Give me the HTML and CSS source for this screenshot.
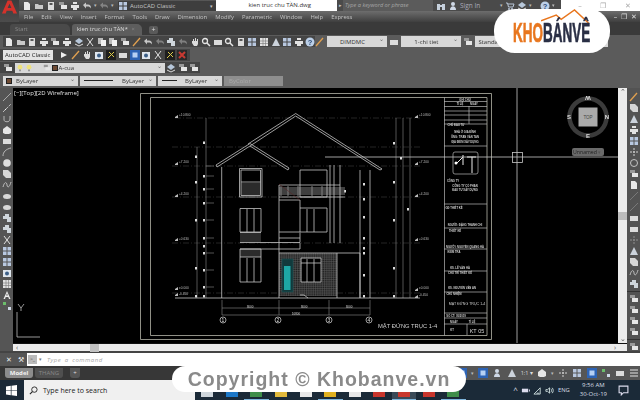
FILE: index.html
```html
<!DOCTYPE html>
<html lang="en">
<head>
<meta charset="utf-8">
<title>AutoCAD Classic - kien truc chu TẦN.dwg</title>
<link rel="stylesheet" href="styles.css">
</head>
<body>
<svg class="sprite">
  <symbol id="doc" viewBox="0 0 10 10"><path d="M2 1h4l2 2v6H2z" fill="#e8e8e8"/></symbol>
  <symbol id="folder" viewBox="0 0 10 10"><path d="M1 3h3l1 1h4v4H1z" fill="#c9c9c9"/></symbol>
  <symbol id="save" viewBox="0 0 10 10"><path d="M2 1h6v8H2z" fill="#dcdcdc"/><path d="M3.500 2h3v2h-3z" fill="#555"/></symbol>
  <symbol id="print" viewBox="0 0 10 10"><path d="M3 1h4v2H3zM1 4h8v3H1zM3 7h4v2H3z" fill="#e2e2e2"/></symbol>
  <symbol id="undo" viewBox="0 0 10 10"><path d="M1 4l3-2.500v2h2c2 0 3 1 3 4-1-1.500-2-2-3-2H4v2z" fill="#c8c8c8"/></symbol>
  <symbol id="cut" viewBox="0 0 10 10"><path d="M2 1l6 8M8 1L2 9" stroke="#e2e2e2" fill="none"/></symbol>
  <symbol id="copy" viewBox="0 0 10 10"><path d="M1 1h5v6H1z" fill="#bbb"/><path d="M4 3h5v6H4z" fill="#f0f0f0"/></symbol>
  <symbol id="hand" viewBox="0 0 10 10"><path d="M2 4h1V2h1v2h1V1h1v3h1V2h1v5L7 9H4L2 6z" fill="#ddd"/></symbol>
  <symbol id="zoom" viewBox="0 0 10 10"><circle cx="4" cy="4" r="2.500" fill="none" stroke="#e6e6e6" stroke-width="1.300"/><path d="M6 6l3 3" stroke="#e6e6e6" stroke-width="1.500"/></symbol>
  <symbol id="grid" viewBox="0 0 10 10"><path d="M1 1h3.500v3.500H1zM5.500 1H9v3.500H5.500zM1 5.500h3.500V9H1zM5.500 5.500H9V9H5.500z" fill="#b8c8e0"/></symbol>
  <symbol id="blue" viewBox="0 0 10 10"><path d="M0 0h10v10H0z" fill="#2d63b5"/><path d="M2.500 2.500h5v5h-5z" fill="#b6d0f4"/></symbol>
  <symbol id="line" viewBox="0 0 10 10"><path d="M1 9l8-8" stroke="#a8a8a8" fill="none"/></symbol>
  <symbol id="pline" viewBox="0 0 10 10"><path d="M1 9l8-8" stroke="#bbb" fill="none" stroke-dasharray="3 1"/><path d="M3 6h1v1H3z" fill="#fff"/></symbol>
  <symbol id="curve" viewBox="0 0 10 10"><path d="M2 2v4c0 2 6 3 6-1M8 5V2" stroke="#b5b5b5" fill="none"/></symbol>
  <symbol id="poly" viewBox="0 0 10 10"><path d="M5 1l4 3v4l-2 1H3L1 8V4z" fill="#e6e6e6"/></symbol>
  <symbol id="rect" viewBox="0 0 10 10"><path d="M1 3h8v5H1z" fill="#dcdcdc"/></symbol>
  <symbol id="arc" viewBox="0 0 10 10"><path d="M1 9C1 5 4 2 9 1" stroke="#b8b8b8" fill="none"/></symbol>
  <symbol id="circle" viewBox="0 0 10 10"><circle cx="5" cy="5" r="3.800" fill="#dedede"/></symbol>
  <symbol id="ring" viewBox="0 0 10 10"><circle cx="5" cy="5" r="3.500" fill="none" stroke="#c4c4c4"/></symbol>
  <symbol id="cloud" viewBox="0 0 10 10"><path d="M1 1h5l3 3v5H4L1 6z" fill="#d6d6d6"/></symbol>
  <symbol id="wave" viewBox="0 0 10 10"><path d="M1 7c2-7 4-4 4-2s2 4 4-3" stroke="#c0c0c0" fill="none"/></symbol>
  <symbol id="ellipse" viewBox="0 0 10 10"><ellipse cx="5" cy="5.500" rx="4" ry="2.500" fill="#d8d8d8"/></symbol>
  <symbol id="block" viewBox="0 0 10 10"><path d="M3 1h4v3h2v5H5V6H1V3h2z" fill="#cfd6dc"/></symbol>
  <symbol id="tri" viewBox="0 0 10 10"><path d="M5 1l4 8H1z" fill="#ccd3dc"/></symbol>
  <symbol id="cross" viewBox="0 0 10 10"><path d="M5 1v8M1 5h8" stroke="#d4d4d4" stroke-dasharray="2 1" fill="none"/></symbol>
  <symbol id="photo" viewBox="0 0 10 10"><path d="M1 2h8v7H1z" fill="#dfe6ee"/><circle cx="5" cy="5.500" r="2" fill="#3c5f88"/></symbol>
  <symbol id="table" viewBox="0 0 10 10"><path d="M1 1h8v8H1z" fill="#e2e2e2"/><path d="M1 4h8M1 6.500h8M4 1v8M6.500 1v8" stroke="#777" stroke-width=".6"/></symbol>
  <symbol id="letter" viewBox="0 0 10 10"><path d="M5 1l3.500 8h-1.500l-.7-2H3.700L3 9H1.500zM4.200 5.500h1.600L5 3.200z" fill="#eee"/></symbol>
  <symbol id="dots" viewBox="0 0 10 10"><path d="M1 1h3v3H1z" fill="#6bbd6b"/><path d="M6 6h3v3H6z" fill="#cfd8e8"/></symbol>
  <symbol id="pen" viewBox="0 0 10 10"><path d="M1 9l7-8" stroke="#e0a050" stroke-width="1.400" fill="none"/></symbol>
  <symbol id="tri2" viewBox="0 0 10 10"><path d="M2 2l6 3-6 3z" fill="#eee"/></symbol>
  <symbol id="star" viewBox="0 0 10 10"><path d="M0 0h10v10H0z" fill="#1e1e1e"/><path d="M2 8l6-6M3 2l5 5" stroke="#dccc4a"/></symbol>
  <symbol id="redx" viewBox="0 0 10 10"><path d="M0 0h10v10H0z" fill="#2a2a2a"/><path d="M2 2l6 6M8 2L2 8" stroke="#c83a32" stroke-width="2"/></symbol>
  <symbol id="stack" viewBox="0 0 10 10"><path d="M1 1h5v3H1z" fill="#999"/><path d="M3 4h6v4H3z" fill="#e6e6e6"/></symbol>
  <symbol id="layer" viewBox="0 0 10 10"><path d="M5 1l4 3-4 3-4-3z" fill="#b7c7da"/><path d="M1 7l4 2 4-2" stroke="#ddd" fill="none"/></symbol>
  <symbol id="burger" viewBox="0 0 10 10"><path d="M1 2h8M1 5h8M1 8h8" stroke="#e4e4e4" stroke-width="1.200"/></symbol>
  <symbol id="person" viewBox="0 0 10 10"><circle cx="5" cy="3" r="2" fill="#cfd8e6"/><path d="M2 9c0-5 6-5 6 0z" fill="#cfd8e6"/></symbol>
  <symbol id="bulb" viewBox="0 0 10 10"><circle cx="5" cy="4" r="3" fill="#efe27c"/><path d="M4 7h2v2H4z" fill="#888"/></symbol>
  <symbol id="cart" viewBox="0 0 10 10"><path d="M1 2h1.500l1 4h4.500l1-3H3" stroke="#b8c6d8" fill="none"/><circle cx="4" cy="8" r="1" fill="#b8c6d8"/><circle cx="7" cy="8" r="1" fill="#b8c6d8"/></symbol>
  <symbol id="binoc" viewBox="0 0 10 10"><path d="M1 3h3v6H1zM6 3h3v6H6zM4 4h2v2H4z" fill="#c6d0dc"/></symbol>
  <symbol id="help" viewBox="0 0 10 10"><circle cx="5" cy="5" r="4.500" fill="#bcd0e8"/><text x="5" y="8" font-size="7.500" font-family="Liberation Sans" font-weight="700" text-anchor="middle" fill="#2c4a78">?</text></symbol>
</svg>

<div class="screen">
  <header class="top">
    <div class="appbtn"><svg class="applogo" viewBox="0 0 18 14"><path d="M7 0h4l6 14h-4l-1-3H6l-1 3H1zM7 8h4L9 3.500z" fill="#d3322b"/></svg></div>
    <div class="topmain">
      <div class="titlebar">
        <div class="qat">
          <svg class="ic"><use href="#doc"/></svg><svg class="ic"><use href="#folder"/></svg><svg class="ic"><use href="#save"/></svg><svg class="ic"><use href="#stack"/></svg><svg class="ic"><use href="#print"/></svg><svg class="ic"><use href="#undo"/></svg><span class="caret">▾</span><svg class="ic dim"><use href="#undo"/></svg><span class="caret">▾</span>
          <div class="workspace"><svg class="ic"><use href="#grid"/></svg><span>AutoCAD Classic</span><span class="wscaret">▾</span></div>
        </div>
        <div class="doctitle"><span>kien truc chu TẦN.dwg</span></div>
        <div class="searchwrap"><span class="searchArrow">▸</span><span class="searchbox">Type a keyword or phrase</span></div>
        <div class="signin"><svg class="ic"><use href="#binoc"/></svg><svg class="ic"><use href="#person"/></svg><span class="signtext">Sign In</span><span class="caret">▾</span><svg class="ic"><use href="#cart"/></svg><svg class="ic"><use href="#layer"/></svg><span class="caret">▾</span><svg class="ic gaphelp"><use href="#help"/></svg><span class="caret">▾</span></div>
        <div class="winctl"><span>–</span><span>❐</span><span>✕</span></div>
      </div>
      <nav class="menubar">
        <span>File</span><span>Edit</span><span>View</span><span>Insert</span><span>Format</span><span>Tools</span><span>Draw</span><span>Dimension</span><span>Modify</span><span>Parametric</span><span>Window</span><span>Help</span><span>Express</span>
        <span class="docctl">– ❐ ✕</span>
      </nav>
    </div>
  </header>

  <div class="tabs">
    <span class="tab">Start</span>
    <span class="tab active">kien truc chu TẦN* <b>×</b></span>
    <span class="tabplus">+</span>
  </div>

  <div class="toolbars">
    <div class="row r1">
      <div class="group g1">
        <svg class="ic"><use href="#doc"/></svg><svg class="ic"><use href="#folder"/></svg><svg class="ic"><use href="#save"/></svg><svg class="ic"><use href="#print"/></svg><svg class="ic"><use href="#stack"/></svg><svg class="ic"><use href="#print"/></svg><svg class="ic"><use href="#layer"/></svg><svg class="ic"><use href="#cut"/></svg><svg class="ic"><use href="#copy"/></svg><svg class="ic"><use href="#copy"/></svg><svg class="ic"><use href="#stack"/></svg><svg class="ic"><use href="#pen"/></svg><svg class="ic"><use href="#undo"/></svg><svg class="ic dim"><use href="#undo"/></svg><svg class="ic"><use href="#block"/></svg><svg class="ic dim"><use href="#undo"/></svg><svg class="ic"><use href="#hand"/></svg><svg class="ic"><use href="#zoom"/></svg><svg class="ic"><use href="#rect"/></svg><svg class="ic"><use href="#zoom"/></svg><svg class="ic"><use href="#save"/></svg><svg class="ic"><use href="#grid"/></svg><svg class="ic"><use href="#table"/></svg><svg class="ic"><use href="#tri"/></svg><svg class="ic"><use href="#grid"/></svg><svg class="ic"><use href="#print"/></svg><svg class="ic"><use href="#help"/></svg>
      </div>
      <div class="dimcombos">
        <svg class="ic"><use href="#pen"/></svg>
        <span class="combo c60 center">DIMDMC<i>⌄</i></span>
        <svg class="ic"><use href="#rect"/></svg>
        <span class="combo c60 center">1-chi tiet<i>⌄</i></span>
        <svg class="ic"><use href="#stack"/></svg>
        <span class="combo c133">Standard</span>
      </div>
    </div>
    <div class="row r2">
      <div class="group g2">
        <span class="wsbox">AutoCAD Classic</span>
        <svg class="ic"><use href="#tri2"/></svg><svg class="ic"><use href="#pen"/></svg><svg class="ic"><use href="#hand"/></svg><svg class="ic"><use href="#photo"/></svg><svg class="ic"><use href="#star"/></svg><svg class="ic"><use href="#rect"/></svg><svg class="ic"><use href="#blue"/></svg><svg class="ic"><use href="#photo"/></svg><svg class="ic"><use href="#cut"/></svg><svg class="ic"><use href="#star"/></svg><svg class="ic"><use href="#redx"/></svg>
      </div>
    </div>
    <div class="row r3">
      <div class="group g3">
        <svg class="ic"><use href="#stack"/></svg>
        <span class="combo layercombo"><svg class="ic"><use href="#bulb"/></svg><svg class="ic"><use href="#bulb"/></svg><svg class="ic dim"><use href="#rect"/></svg><svg class="ic"><use href="#stack"/></svg><em class="swatch"></em>A-cua<i>⌄</i></span>
        <svg class="ic"><use href="#layer"/></svg><svg class="ic"><use href="#stack"/></svg><svg class="ic"><use href="#stack"/></svg>
      </div>
    </div>
    <div class="row r4">
      <span class="combo bylayer c75"><em class="swatch"></em>ByLayer<i>⌄</i></span>
      <span class="combo bylayer c77"><em class="rule"></em>ByLayer<i>⌄</i></span>
      <span class="combo bylayer c63"><em class="rule short"></em>ByLayer<i>⌄</i></span>
      <span class="combo bylayer c59 off">ByColor</span>
    </div>
  </div>

  <main class="main">
    <aside class="tool leftbar">
      <svg class="ic"><use href="#line"/></svg><svg class="ic"><use href="#pline"/></svg><svg class="ic"><use href="#curve"/></svg><svg class="ic"><use href="#poly"/></svg><svg class="ic"><use href="#rect"/></svg><svg class="ic"><use href="#arc"/></svg><svg class="ic"><use href="#circle"/></svg><svg class="ic"><use href="#cloud"/></svg><svg class="ic"><use href="#wave"/></svg><svg class="ic"><use href="#ellipse"/></svg><svg class="ic"><use href="#ellipse"/></svg><svg class="ic"><use href="#block"/></svg><svg class="ic"><use href="#block"/></svg><svg class="ic"><use href="#cut"/></svg><svg class="ic"><use href="#grid"/></svg><svg class="ic"><use href="#grid"/></svg><svg class="ic"><use href="#photo"/></svg><svg class="ic"><use href="#table"/></svg><svg class="ic"><use href="#letter"/></svg><svg class="ic"><use href="#dots"/></svg>
    </aside>
    <div class="viewcol">
      <div class="viewrow">
        <div class="canvas">
          <svg class="drawing" viewBox="13 88 605 256">
            <defs>
              <pattern id="hatchgrid" width="1.800" height="1.800" patternUnits="userSpaceOnUse">
                <rect width="1.800" height="1.800" class="hbg"/>
                <path d="M0 .4H1.800M.4 0V1.800" class="hln"/>
              </pattern>
            </defs>
            <g class="frame">
              <path d="M140.500 93.500H491.500V339.500H140.500zM150.500 97.500H487V335.500H150.500z"/>
            </g>
            <g class="tb">
              <path d="M444.500 97.500V335.500M444 101.500H487M444 106.500H487M444 111H487M444 115H487M444 120H487M444 124H487M444 146H487M444 204H487M444 228H487M444 249H487M444 271H487M444 292H487M444 313H487M444 318H487M444 324H487M469 106V124M467 324V335"/>
              <rect x="453" y="152" width="25" height="22" rx="2"/>
              <path d="M467 157H476M472 157V173M463 155V165M457 163L463 157" class="bright"/>
              <circle cx="456" cy="163" r="1.500" class="dotfill"/>
            </g>
            <g class="dash">
              <path d="M175 118H420M172 147H420M172 166H420M172 197H420M172 243H420M172 293H420"/>
            </g>
            <g class="dims">
              <path d="M206 118V298M197 147V298M396 118V298M403 118V298M410 118V298M222 308H370M222 315H370M222 300V315M370 300V315M279 300V315M329 300V315"/>
              <path d="M206 166H214M206 176H214M206 189H214M206 203H214M206 220H214M206 238H214M206 253H214M206 270H214M206 287H214"/>
            </g>
            <path class="marks" d="M204 141.500v2.500M204 175v2.500M204 188v2.500M204 202v2.500M196 155.500v2.500M196 181v2.500M196 219v2.500M204 219v2.500M204 237v2.500M204 245v2.500M204 252v2.500M204 269v2.500M204 286v2.500M204 295v2.500M196 267v2.500M196 295v2.500M394 142v2.500M394 181v2.500M401 157v2.500M364 183v2.500M364 198v2.500M364 216v2.500M345 190v2.500M408 208v2.500M364 237v2.500M364 247v2.500M364 252v2.500M364 274v2.500M364 295v2.500M394 219v2.500M394 267v2.500M394 295v2.500"/>
            <g class="levels">
              <path d="M175 117l3-2v3h-3zM175 164l3-2v3h-3zM175 196l3-2v3h-3zM175 240l3-2v3h-3zM175 289l3-2v3h-3zM175 295l3-2v3h-3zM415 117l3-2v3h-3zM415 164l3-2v3h-3zM415 196l3-2v3h-3zM415 240l3-2v3h-3zM415 290l3-2v3h-3zM415 297l3-2v3h-3z"/>
              <text x="179" y="116">+10.800</text><text x="179" y="163">+7.200</text><text x="179" y="195">+4.200</text><text x="179" y="240">+0.630</text><text x="179" y="289">±0.000</text><text x="179" y="295">-0.450</text>
              <text x="419" y="116">+10.800</text><text x="419" y="163">+7.200</text><text x="419" y="195">+4.200</text><text x="419" y="240">+0.630</text><text x="419" y="289">±0.000</text><text x="419" y="296">-0.450</text>
            </g>
            <rect class="shade" x="241" y="183" width="19" height="12.500"/>
            <rect class="shade" x="240" y="233" width="21" height="9"/>
            <rect class="shade" x="240" y="249" width="21" height="8"/>
            <rect class="hatchfill" x="279" y="253" width="58" height="43"/>
            <g class="balcony">
              <path d="M281 186V196M288 186V196M298 186V196M312 186V196M322 186V196"/>
              <path d="M279 188H345M279 190H345M279 192H345M279 194H345"/>
            </g>
            <g class="house">
              <path d="M250 146L295.700 116L380 170M248 144L295.700 113.500L382 169"/>
              <path d="M217 167L250 146L288 170M216 165L250 143.500L289 168"/>
              <path d="M216 165L217 167M382 169L380 170M288 170L289 168"/>
              <path d="M221.700 167V298M370 170V298M279 185V298M175 298H420"/>
              <path d="M239.500 168.500H262V197H239.500zM241 170H260.500V195.500H241zM241 182H260.500"/>
              <path d="M240 208.500H261V232H240zM247 209V232M254 209V232"/>
              <path d="M240 232.500H261M240 242.500H300V249H240M240 249H261V282H240zM247 258V282M254 258V282M240 257H261"/>
              <path d="M300 170H327V197H300zM330 165V243M334 165V243M340 165V243"/>
              <path d="M300 208H327V232H300zM307 209V232M314 209V232"/>
              <path d="M279 200H300V208M279 185H340M279 197H345M279 232H300M279 238H300M279 253H360V298M360 170V298M337 253V298"/>
              <path d="M300 232.500V242"/>
              <path d="M300 295H304L308 298"/>
            </g>
            <path class="redline" d="M279 184L300 200"/>
            <rect class="doorframe" x="282" y="259" width="11" height="33"/>
            <rect class="door" x="284" y="266" width="6.500" height="24"/>
            <rect class="glass" x="301.500" y="258.500" width="19.500" height="23.500"/>
            <path class="house" d="M301 258H321V282H301zM307 259V282M314 259V282M301 263H321"/>
            <g class="axes">
              <circle cx="223" cy="320" r="3"/><circle cx="278" cy="320" r="3"/><circle cx="329" cy="320" r="3"/><circle cx="369" cy="320" r="3"/>
              <text x="223" y="322">1</text><text x="278" y="322">2</text><text x="329" y="322">3</text><text x="369" y="322">4</text>
            </g>
            <text class="dimtxt" x="250" y="308">3600</text><text class="dimtxt" x="304" y="308">3600</text><text class="dimtxt" x="296" y="315">10800</text><text class="dimtxt" x="349" y="308">3000</text>
            <text class="sheet" x="378" y="328">MẶT ĐỨNG TRỤC 1-4</text>
            <g class="tiny">
              <text x="465" y="101">GHI CHÚ</text><text x="460" y="105">TỈ LỆ</text><text x="474" y="105">NGÀY</text>
              <text x="456" y="126">CHỦ ĐẦU TƯ</text>
              <text x="465" y="133">NHÀ Ở GIA ĐÌNH</text><text x="465" y="138">ÔNG: TRẦN VĂN TẦN</text><text x="465" y="143">ĐỊA ĐIỂM XÂY DỰNG</text>
              <text x="453" y="182">CÔNG TY</text><text x="465" y="187">CÔNG TY CỔ PHẦN</text><text x="465" y="191">ĐẦU TƯ XÂY DỰNG</text>
              <text x="454" y="209">GĐ THIẾT KẾ</text>
              <text x="465" y="226">NGƯỜI: ĐẶNG THANH CHI</text><text x="455" y="232">THIẾT KẾ</text>
              <text x="465" y="248">NGƯỜI: NGUYỄN QUANG HÀ</text><text x="454" y="253">KIỂM TRA</text>
              <text x="460" y="269">KS. LÊ VĂN HÀ</text><text x="460" y="274">CHỦ TRÌ THIẾT KẾ</text>
              <text x="462" y="289">KS. NGUYỄN VĂN AN</text><text x="454" y="295">CHỦ NHIỆM</text>
              <text x="456" y="317">SỐ CT: 05/2019</text><text x="454" y="323">NGÀY</text><text x="472" y="323">TỈ LỆ</text><text x="452" y="331">KT</text>
            </g>
            <text class="tbname" x="467" y="305">MẶT ĐỨNG TRỤC 1-4</text>
            <text class="kt" x="477" y="333">KT 05</text>
            <g class="ucs">
              <path d="M17 312V337H40"/>
              <path d="M18 304L21 308L24 304M21 308V311" />
            </g>
            <g class="cross">
              <path d="M325 157H618M517 88V344"/>
              <rect x="512.500" y="152.500" width="10" height="10"/>
            </g>
          </svg>
          <div class="vplabel">[−][Top][2D Wireframe]</div>
          <div class="cube">
            <svg class="cubesvg" viewBox="0 0 50 50">
              <circle cx="25" cy="25" r="18.500" class="cubering"/>
              <rect x="15.500" y="15.500" width="19" height="19" class="cubeface"/>
              <text x="25" y="27" class="cubetop">TOP</text>
              <text x="25" y="8" class="cubel" transform="rotate(180 25 6)">W</text>
              <text x="44" y="27" class="cubel">N</text>
              <text x="6" y="27" class="cubel">S</text>
              <text x="25" y="46" class="cubel">E</text>
            </svg>
            <span class="unnamed">Unnamed <i>▾</i></span>
          </div>
        </div>
        <div class="vscroll"><span class="sbarrow">⌃</span><span class="sbthumb"></span><span class="sbarrow">⌄</span></div>
      </div>
      <div class="hscroll"><span class="sbarrow">‹</span><span class="hthumb"></span><span class="hright">›</span></div>
    </div>
    <aside class="tool rightbar">
      <svg class="ic"><use href="#pen"/></svg><svg class="ic"><use href="#cloud"/></svg><svg class="ic"><use href="#tri"/></svg><svg class="ic"><use href="#print"/></svg><svg class="ic"><use href="#grid"/></svg><svg class="ic"><use href="#cross"/></svg><svg class="ic"><use href="#ring"/></svg><svg class="ic"><use href="#stack"/></svg><svg class="ic"><use href="#doc"/></svg><svg class="ic dim"><use href="#line"/></svg><svg class="ic dim"><use href="#line"/></svg><svg class="ic"><use href="#rect"/></svg><svg class="ic"><use href="#rect"/></svg><svg class="ic dim"><use href="#cross"/></svg><svg class="ic"><use href="#tri"/></svg><svg class="ic"><use href="#cloud"/></svg><svg class="ic"><use href="#wave"/></svg><svg class="ic"><use href="#block"/></svg>
      <span class="tooldiv"></span>
      <svg class="ic"><use href="#stack"/></svg><svg class="ic"><use href="#stack"/></svg><svg class="ic"><use href="#stack"/></svg><svg class="ic"><use href="#stack"/></svg>
      <span class="tooldiv"></span>
      <svg class="ic"><use href="#stack"/></svg>
    </aside>
  </main>

  <div class="cmdline">
    <div class="cmdtools"><span>✕</span><span>⚒</span></div>
    <span class="cmdicon">&gt;_</span><span class="caret darkc">▾</span>
    <span class="cmdhint">Type a command</span>
  </div>

  <div class="layouts">
    <span class="ltab on">Model</span>
    <span class="ltab">THANG</span>
    <span class="ltab plus">+</span>
    <div class="status">
      <svg class="ic"><use href="#blue"/></svg><span class="caret">▾</span><svg class="ic"><use href="#blue"/></svg><svg class="ic"><use href="#person"/></svg><svg class="ic"><use href="#tri"/></svg><span class="ratio">1:1 ▾</span><svg class="ic"><use href="#poly"/></svg><span class="caret">▾</span><svg class="ic"><use href="#cross"/></svg><svg class="ic"><use href="#grid"/></svg><svg class="ic"><use href="#blue"/></svg><svg class="ic"><use href="#dots"/></svg><svg class="ic"><use href="#rect"/></svg><svg class="ic"><use href="#burger"/></svg>
    </div>
  </div>

  <footer class="taskbar">
    <svg class="winlogo" viewBox="0 0 11 11"><path d="M0 1.500L4.800.8v4.400H0zM5.500.7L11 0v5.200H5.500zM0 5.800h4.800v4.400L0 9.500zM5.500 5.800H11V11L5.500 10.300z" fill="#fff"/></svg>
    <div class="tsearch"><svg class="tsicon" viewBox="0 0 10 10"><circle cx="6" cy="4" r="3" fill="none" stroke="#222"/><path d="M3.800 6.200L1 9" stroke="#222" stroke-width="1.200"/></svg><span>Type here to search</span></div>
    <div class="apps">
      <span class="app"><em class="c1"></em></span><span class="app"><em class="c2"></em></span><span class="app act"><em class="c3"></em></span><span class="app"><em class="c4"></em></span><span class="app"><em class="c5"></em></span><span class="app act"><em class="c6"></em></span><span class="app"><em class="c5"></em></span><span class="app"><em class="c7"></em></span><span class="app act lit"><em class="c8"></em></span><span class="app"><em class="c7"></em></span><span class="app act"><em class="c3"></em></span>
    </div>
    <div class="tray">
      <span class="chev">^</span>
      <svg class="tr" viewBox="0 0 10 10"><path d="M1 3h7v4H1z" fill="#dde"/><path d="M9 4h1v2H9z" fill="#dde"/></svg>
      <svg class="tr" viewBox="0 0 10 10"><path d="M1 9L8 2v7zM4 8h3" stroke="#cdd" fill="none"/></svg>
      <svg class="tr" viewBox="0 0 10 10"><path d="M1 4h2l2-2v6L3 6H1zM6.500 3c1 1 1 3 0 4M8 2c1.500 1.500 1.500 4.500 0 6" stroke="#cdd" fill="none"/></svg>
      <span class="eng">ENG</span>
      <span class="clock">9:56 AM<br>30-Oct-19</span>
      <svg class="notif" viewBox="0 0 10 10"><path d="M1 1h8v6H5L3 9V7H1z" fill="none" stroke="#dde"/></svg>
    </div>
  </footer>
</div>

<div class="logo">
  <svg class="roof" viewBox="0 0 50 16"><path d="M0 11.700L15.200 6 20.200 10.300 33.500 1 47.500 14" fill="none" stroke="#e8761e" stroke-width="1.500"/></svg>
  <div class="logotext"><span class="kho">KHO</span><span class="bv">BÁNVÊ</span></div>
</div>
<div class="copy">Copyright © Khobanve.vn</div>
</body>
</html>
```
FILE: styles.css
```css
* { box-sizing: border-box; }
html, body { margin: 0; padding: 0; }
body { width: 640px; height: 400px; overflow: hidden; position: relative; background: #555; font-family: "Open Sans", "Liberation Sans", sans-serif; }
.sprite { display: none; }
.screen { width: 640px; height: 400px; display: flex; flex-direction: column; filter: blur(.4px); }
.ic { width: 10px; height: 10px; flex: none; display: block; }
.dim { opacity: .45; }
.caret { font-size: 5px; color: #bbb; line-height: 1; }

.top { height: 22px; display: flex; background: #555; }
.appbtn { width: 19px; background: linear-gradient(#3c3c3c, #4c4c4c); display: flex; justify-content: center; align-items: flex-start; }
.applogo { width: 17px; height: 14px; }
.topmain { flex: 1; display: flex; flex-direction: column; min-width: 0; }
.titlebar { height: 11px; display: flex; align-items: stretch; background: #fff; }
.qat { width: 197px; background: linear-gradient(#575757, #444); display: flex; align-items: center; gap: 2px; padding-left: 3px; }
.workspace { margin-left: 2px; flex: 1; height: 10px; background: #3e3e3e; display: flex; align-items: center; gap: 2px; font-size: 6px; color: #c6c6c6; padding-right: 3px; white-space: nowrap; }
.wscaret { margin-left: auto; font-size: 5px; }
.doctitle { width: 121px; background: #fff; color: #333; font-size: 6px; line-height: 11px; text-align: right; white-space: nowrap; padding-right: 26px; }
.searchwrap { width: 96px; display: flex; background: #fff; }
.searchArrow { width: 6px; background: #4b4b4b; font-size: 5px; color: #ccc; line-height: 10px; text-align: center; height: 11px; }
.searchbox { flex: 1; height: 11px; background: #5b5b5b; color: #a6a6a6; font-size: 5.600px; font-style: italic; line-height: 10px; padding-left: 2px; white-space: nowrap; }
.signin { width: 128px; background: #4a4a4a; display: flex; align-items: center; gap: 2px; padding-left: 3px; }
.signtext { font-size: 6.500px; color: #aab; width: 38px; white-space: nowrap; }
.gaphelp { margin-left: 6px; }
.winctl { flex: 1; background: #fff; display: flex; justify-content: space-around; align-items: center; color: #aaa; font-size: 7px; padding-left: 8px; }
.menubar { height: 11px; background: linear-gradient(#6d6d6d, #3f3f3f); display: flex; align-items: center; color: #c4c4c4; font-size: 5.900px; padding-left: 5px; gap: 8px; white-space: nowrap; }
.docctl { margin-left: auto; color: #ddd; font-size: 7px; padding-right: 2px; letter-spacing: 1px; }

.tabs { height: 13px; background: #3a3a3a; display: flex; align-items: flex-end; padding-left: 10px; gap: 2px; font-size: 5.800px; }
.tab { width: 60px; height: 11px; background: #4a4a4a; color: #888; border-radius: 3px 5px 0 0; padding-left: 5px; line-height: 11px; white-space: nowrap; }
.tab.active { width: 70px; background: #5d5d5d; color: #ddd; }
.tab b { color: #888; font-weight: 400; margin-left: 2px; }
.tabplus { margin: 0 0 1px 5px; width: 9px; height: 8px; background: #5a5a5a; border-radius: 2px; color: #ddd; font-size: 7px; line-height: 8px; text-align: center; }

.toolbars { height: 53px; background: #5b5b5b; display: flex; flex-direction: column; }
.row { display: flex; align-items: center; }
.r1 { height: 13px; justify-content: space-between; padding-left: 3px; padding-right: 32px; }
.r2 { height: 14px; }
.r3 { height: 11px; }
.r4 { height: 15px; gap: 2px; padding-left: 3px; }
.group { background: #454545; display: flex; align-items: center; }
.g1 { width: 317px; height: 11px; gap: 1.600px; padding-left: 1px; }
.g2 { width: 190px; height: 12px; gap: 1.800px; }
.wsbox { width: 50px; height: 10px; margin: 0 4px 0 3px; background: #e4e4e4; color: #222; font-size: 6px; line-height: 10px; padding-left: 2px; white-space: nowrap; overflow: hidden; }
.g3 { width: 200px; height: 11px; padding-left: 3px; gap: 1.500px; }
.combo { height: 10px; background: #d8d8d8; color: #333; font-size: 6px; line-height: 10px; display: flex; align-items: center; flex: none; position: relative; white-space: nowrap; }
.combo i { position: absolute; right: 3px; top: -2px; font-style: normal; color: #666; font-size: 6px; }
.center { justify-content: center; padding-right: 10px; }
.dimcombos { display: flex; align-items: center; gap: 2px; }
.c60 { width: 60px; height: 11px; }
.c133 { width: 133px; height: 11px; padding-left: 3px; }
.c75 { width: 75px; } .c77 { width: 76px; } .c63 { width: 64px; } .c59 { width: 59px; }
.bylayer { height: 10px; padding-left: 3px; gap: 3px; }
.off { background: #8e8e8e; color: #aaa; padding-left: 5px; }
.layercombo { width: 150px; gap: 0; padding-left: 1px; }
.layercombo .ic { width: 8px; height: 8px; margin-right: 1px; }
.swatch { width: 6px; height: 6px; background: #6e4a33; border: 1px solid #222; flex: none; margin-right: 1px; }
.rule { width: 29px; height: 1px; background: #222; flex: none; margin-left: 1px; margin-right: 6px; }
.rule.short { width: 15px; margin-right: 5px; }

.main { height: 263px; display: flex; }
.tool { width: 13px; background: #555; display: flex; flex-direction: column; align-items: center; flex: none; }
.leftbar { padding-top: 4px; gap: 1px; }
.rightbar { padding-top: 4px; gap: 1px; background: #535353; }
.tooldiv { width: 13px; height: 1px; background: #333; margin: 1px 0; flex: none; }
.viewcol { flex: 1; display: flex; flex-direction: column; min-width: 0; }
.viewrow { flex: 1; display: flex; min-height: 0; }
.canvas { width: 605px; height: 255px; background: #000; position: relative; overflow: hidden; }
.drawing { width: 605px; height: 256px; display: block; }
.drawing path, .drawing rect, .drawing circle { fill: none; }
.drawing .hbg { fill: #1c1c1c; }
.drawing .hln { stroke: #5e5e5e; stroke-width: .5; }
.drawing .hatchfill { fill: url(#hatchgrid); }
.drawing .shade { fill: #2b2b2b; }
.frame path { stroke: #b5b5a8; stroke-width: .8; }
.tb path, .tb rect { stroke: #b8b8b8; stroke-width: .7; }
.tb .bright { stroke: #eee; stroke-width: 1; }
.drawing .tb .dotfill { fill: #fff; }
.dash path { stroke: #3c3c3c; stroke-width: .6; stroke-dasharray: 6 2 1 2; }
.dims path { stroke: #8a8a8a; stroke-width: .6; }
.marks { stroke: #f4f4f4; stroke-width: 1.800; }
.levels path { fill: #bbb; }
.levels text { fill: #bdbdbd; font-size: 3.200px; font-family: "Liberation Sans", sans-serif; }
.house path, path.house { stroke: #c4c4c4; stroke-width: .8; }
.balcony path { stroke: #8d8d8d; stroke-width: .9; }
.redline { stroke: #5a2222; stroke-width: .5; }
.drawing .doorframe { fill: #123a3c; stroke: #1d5d5f; stroke-width: .5; }
.drawing .door { fill: #1ea7a5; }
.drawing .glass { fill: #000; }
.axes circle { stroke: #ddd; stroke-width: .7; }
.axes text { fill: #ddd; font-size: 5px; text-anchor: middle; font-family: "Liberation Sans", sans-serif; }
.dimtxt { fill: #dedede; font-size: 3px; text-anchor: middle; font-family: "Liberation Sans", sans-serif; }
.sheet { fill: #cfcfcf; font-size: 5.800px; font-family: "Liberation Sans", sans-serif; }
.tiny text { fill: #d0d0d0; font-size: 2.700px; text-anchor: middle; font-family: "Liberation Sans", sans-serif; font-weight: 700; }
.tbname { fill: #cfcfcf; font-size: 3.600px; text-anchor: middle; font-family: "Liberation Sans", sans-serif; }
.kt { fill: #d8d8d8; font-size: 5.500px; text-anchor: middle; font-family: "Liberation Sans", sans-serif; }
.ucs path { stroke: #bdbdbd; stroke-width: .8; }
.cross path, .cross rect { stroke: #c8c8c8; stroke-width: .8; }
.vplabel { position: absolute; left: 1px; top: 1px; color: #e4e4e4; font-size: 6px; line-height: 9px; white-space: nowrap; }
.cube { position: absolute; left: 550px; top: 4px; width: 50px; display: flex; flex-direction: column; align-items: center; }
.cubesvg { width: 50px; height: 50px; display: block; }
.cubesvg .cubering { fill: none; stroke: #3b3b3b; stroke-width: 4.500; }
.cubeface { fill: #aaa; }
.cubetop { fill: #444; font-size: 4.500px; text-anchor: middle; font-family: "Liberation Sans", sans-serif; }
.cubel { fill: #ddd; font-size: 6px; text-anchor: middle; font-weight: 700; font-family: "Liberation Sans", sans-serif; }
.unnamed { width: 32px; height: 8px; margin-top: 6px; background: #6a6a6a; border-radius: 2px; color: #222; font-size: 5.200px; line-height: 8px; padding-left: 1px; white-space: nowrap; }
.unnamed i { font-style: normal; color: #555; }
.vscroll { width: 9px; background: #ececec; display: flex; flex-direction: column; align-items: center; justify-content: space-between; }
.sbarrow { font-size: 7px; line-height: 7px; color: #555; height: 8px; }
.sbthumb { width: 9px; height: 8px; background: #bdbdbd; }
.hscroll { height: 8px; flex: none; background: #ececec; display: flex; align-items: center; border-top: 1px solid #111; padding-left: 3px; position: relative; }
.hthumb { width: 9px; height: 8px; background: #c2c2c2; margin-left: 72px; flex: none; }
.hright { margin-left: auto; margin-right: 11px; font-size: 7px; color: #555; line-height: 7px; }

.cmdline { height: 15px; flex: none; background: #fff; border-top: 2px solid #444; display: flex; align-items: center; }
.cmdtools { width: 27px; height: 13px; background: #555; color: #eee; font-size: 7px; display: flex; justify-content: space-around; align-items: center; padding-left: 3px; }
.cmdicon { width: 9px; height: 9px; background: #bbb; color: #555; font-size: 5px; line-height: 9px; text-align: center; margin-left: 1px; }
.darkc { color: #777; margin: 0 2px; }
.cmdhint { color: #a8a8a8; font-size: 6px; font-style: italic; letter-spacing: .5px; word-spacing: 1.500px; margin-left: 3px; white-space: nowrap; }

.layouts { height: 14px; flex: none; background: #373737; display: flex; align-items: center; padding-left: 5px; gap: 2px; font-size: 6px; }
.ltab { width: 28px; height: 10px; border-radius: 0 0 3px 3px; background: #4f4f4f; color: #888; line-height: 10px; text-align: center; }
.ltab.on { background: #8c8c8c; color: #f2f2f2; font-weight: 700; }
.ltab.plus { width: 10px; margin-left: 5px; color: #ddd; background: #555; }
.status { margin-left: auto; width: 183px; height: 14px; background: #565656; display: flex; align-items: center; justify-content: space-between; padding-right: 1px; }
.ratio { font-size: 5.500px; color: #ddd; white-space: nowrap; }

.taskbar { height: 20px; flex: none; background: #1b2a38; display: flex; align-items: center; }
.winlogo { width: 11px; height: 11px; margin: 0 7px 0 6px; flex: none; }
.tsearch { width: 171px; height: 20px; background: #f0f0f0; display: flex; align-items: center; color: #222; font-size: 7px; padding-left: 5px; gap: 5px; flex: none; white-space: nowrap; }
.tsicon { width: 9px; height: 9px; flex: none; }
.apps { display: flex; flex: none; height: 20px; }
.app { width: 24.600px; height: 20px; display: flex; justify-content: center; align-items: flex-start; padding-top: 5px; border-bottom: 1px solid transparent; }
.app.act { border-bottom-color: #7fb6dd; }
.app.lit { background: #3a4a58; }
.app em { width: 12px; height: 12px; display: block; }
.c1 { background: #cfd6dc; } .c2 { background: #1d78c8; } .c3 { background: #3f8e4a; } .c4 { background: #e2b93b; }
.c5 { background: #e8e8e8; } .c6 { background: #e0b020; } .c7 { background: #c9362d; } .c8 { background: #c8382e; }
.tray { margin-left: auto; display: flex; align-items: center; gap: 3px; color: #d8dee4; padding-right: 11px; }
.chev { font-size: 8px; line-height: 8px; }
.tr { width: 9px; height: 9px; }
.eng { font-size: 5.800px; margin: 0 7px 0 1px; }
.clock { font-size: 6px; line-height: 9.500px; text-align: center; white-space: nowrap; margin-right: 8px; }
.notif { width: 11px; height: 11px; }

.logo { position: absolute; left: 494px; top: 9px; width: 116px; height: 44px; background: #fff; border-radius: 21px; }
.roof { position: absolute; left: 47px; top: 0; width: 50px; height: 16px; }
.logotext { position: absolute; left: 19px; top: 9px; width: 78px; display: flex; font-family: "Liberation Sans", sans-serif; font-weight: 700; font-size: 27px; line-height: 30px; white-space: nowrap; transform: scaleX(.5); transform-origin: 0 50%; -webkit-text-stroke: .7px currentColor; }
.kho { color: #e8761e; }
.bv { color: #2a2f45; }
.copy { position: absolute; left: 172px; top: 366px; width: 294px; height: 26px; background: #fff; border-radius: 13px; color: #8a8a8a; font: 700 19.500px/26px "Liberation Sans", sans-serif; letter-spacing: 1px; text-align: center; white-space: nowrap; }
```
